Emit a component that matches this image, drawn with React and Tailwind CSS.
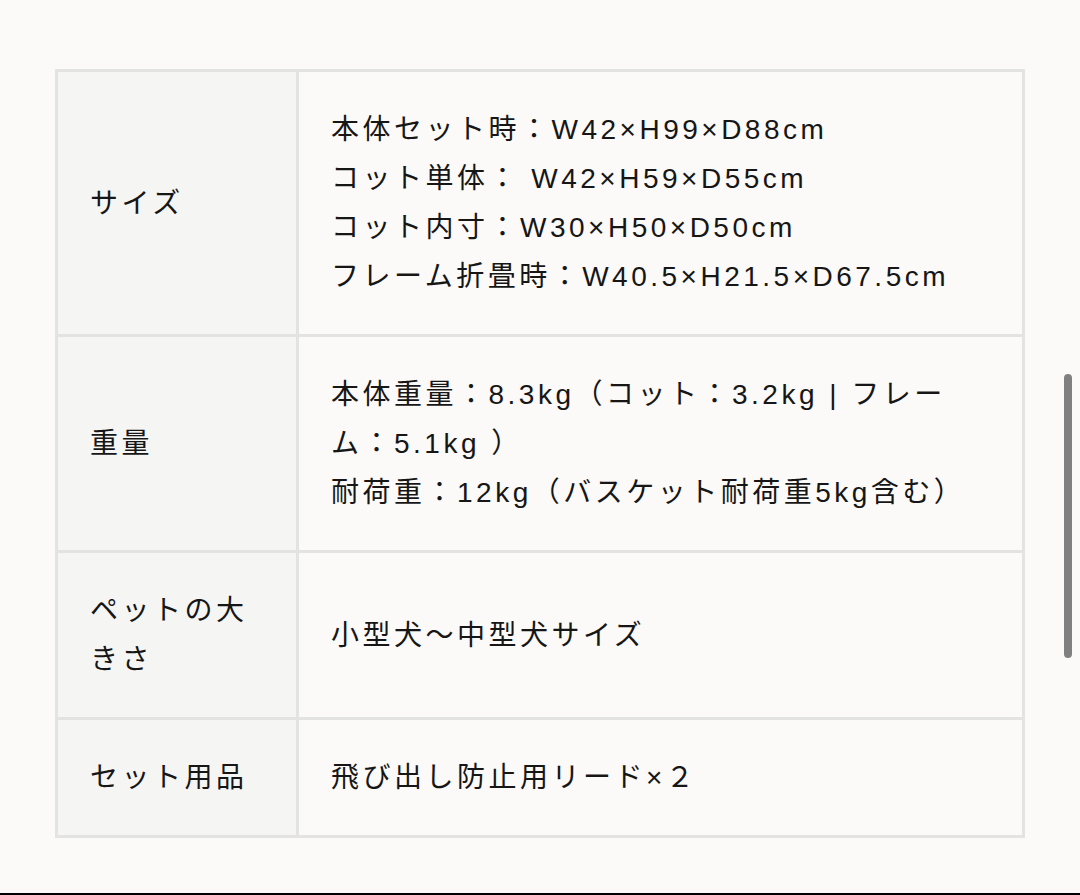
const rows = [
  {
    label: 'サイズ',
    lines: [
      '本体セット時：W42×H99×D88cm',
      'コット単体： W42×H59×D55cm',
      'コット内寸：W30×H50×D50cm',
      'フレーム折畳時：W40.5×H21.5×D67.5cm',
    ],
  },
  {
    label: '重量',
    lines: [
      '本体重量：8.3kg（コット：3.2kg | フレーム：5.1kg ）',
      '耐荷重：12kg（バスケット耐荷重5kg含む）',
    ],
  },
  { label: 'ペットの大きさ', lines: ['小型犬～中型犬サイズ'] },
  { label: 'セット用品', lines: ['飛び出し防止用リード×２'] },
];

export default function App() {
  return (
    <div
      className="relative h-[895px] overflow-hidden bg-[#fbfaf8] text-[#161616]"
      style={{ fontFamily: '"Liberation Sans", "Noto Sans CJK JP", sans-serif' }}
    >
      <div className="px-[55px] pt-[69px]">
        <table className="w-full border-collapse border-[3px] border-[#e3e3e2] text-[28px] leading-[49px] tracking-[0.125em]">
          <tbody>
            {rows.map((row) => (
              <tr key={row.label}>
                <th className="w-[241px] border-[3px] border-[#e3e3e2] bg-[#f5f5f4] px-8 py-[33px] text-left align-middle font-normal">
                  {row.label}
                </th>
                <td className="border-[3px] border-[#e3e3e2] px-8 py-[33px] align-middle">
                  {row.lines.map((line) => (
                    <div key={line}>{line}</div>
                  ))}
                </td>
              </tr>
            ))}
          </tbody>
        </table>
      </div>

      {/* overlay scrollbar */}
      <div className="absolute right-[8px] top-[374px] h-[284px] w-[8px] rounded-full bg-[#808080]" />
      <div className="absolute bottom-0 left-0 h-[2px] w-full bg-black" />
    </div>
  );
}
